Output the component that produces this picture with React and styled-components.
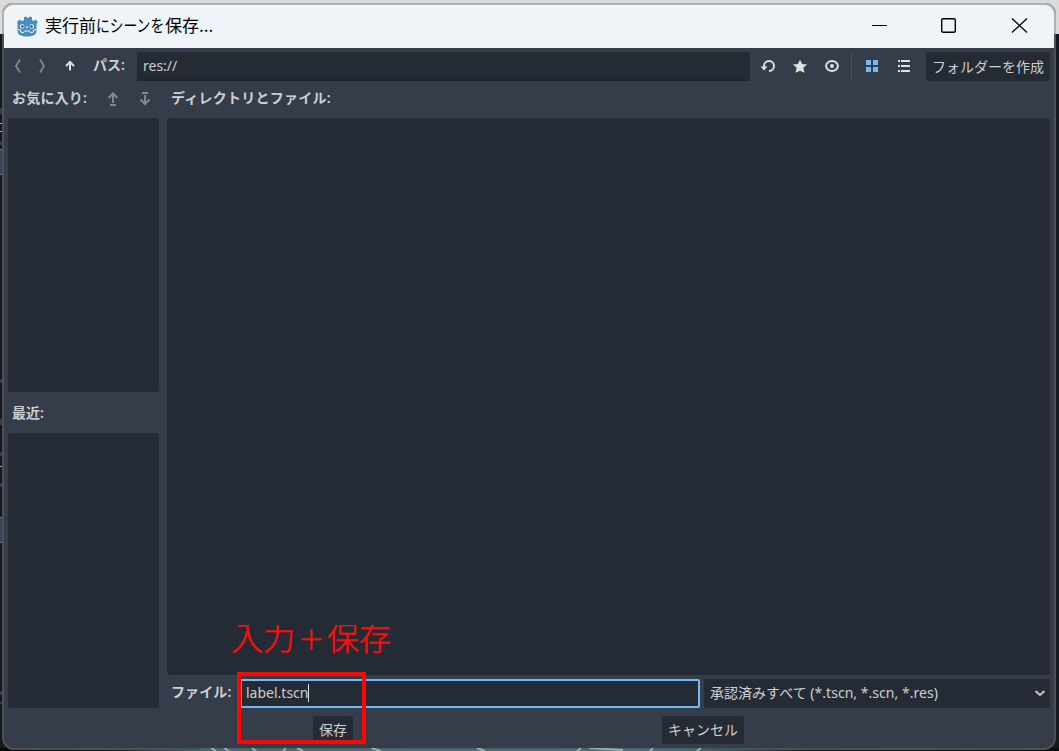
import React from 'react';
import styled, { createGlobalStyle } from 'styled-components';

const Global = createGlobalStyle`
  *{box-sizing:border-box}
  body{margin:0;overflow:hidden;background:#14171d}
`;
const Desktop = styled.div`
  position:relative;width:1059px;height:751px;padding:5px 5px 3px 4px;overflow:hidden;
  font:14px/20px "Noto Sans","Noto Sans CJK JP",sans-serif;color:#cdcfd2;
`;
const Backdrop = styled.svg`position:absolute;left:0;top:0;`;
const Foam = styled.svg`position:absolute;left:0;top:748px;`;
const Window = styled.div`
  position:relative;width:1050px;height:743px;border-radius:9px 9px 10px 10px;
  background:#363d4a;box-shadow:0 0 0 2px #504f52;display:flex;flex-direction:column;
`;
const TitleBar = styled.header`
  height:43px;flex:none;background:#eff4f9;border-radius:9px 9px 0 0;display:flex;align-items:center;
  color:#000;padding-left:12px;box-shadow:0 0 0 2px #b0b0b0;
  clip-path:polygon(-2px -2px,1052px -2px,1052px 29px,1050px 29px,1050px 43px,0 43px,0 29px,-2px 29px);
`;
const Title = styled.div`
  font:17px/24px "Noto Sans CJK JP",sans-serif;margin:-4px 0 0 7px;flex:1;white-space:nowrap;display:flex;
`;
const Kana = styled.span`display:block;width:69px;transform:scaleX(.81);transform-origin:0 0;`;
const Caption = styled.svg`width:70px;height:43px;position:relative;left:1px;`;
const Body = styled.main`flex:1;padding:4px;display:flex;flex-direction:column;`;
const Toolbar = styled.div`height:29px;display:flex;align-items:center;`;
const Icon = styled.svg`
  width:16px;height:16px;flex:none;margin:0 0 1px ${p => p.$gap || 0}px;opacity:${p => p.$dim ? .45 : 1};
`;
const Label = styled.div`
  font-weight:600;white-space:nowrap;margin-left:${p => p.$left || 0}px;width:${p => p.$w}px;flex:none;
  padding-bottom:${p => p.$lift || 0}px;letter-spacing:${p => p.$track || 0}px;
`;
const Field = styled.div`
  height:29px;background:#252b34;border-radius:3px;display:flex;align-items:center;padding:0 6px;
  width:${p => p.$w}px;flex:none;white-space:nowrap;
`;
const PathField = styled(Field)`margin-left:12px;border-bottom:2px solid #20252d;border-radius:3px 3px 0 0;`;
const NameField = styled(Field)`border:2px solid #70bafa;padding:0 4px 2px;margin-left:8px;border-radius:2px;`;
const Caret = styled.i`width:1px;height:18px;background:#dfe0e2;`;
const FilterField = styled(Field)`margin-left:4px;justify-content:space-between;padding:0 2px 1px 6px;letter-spacing:.03px;`;
const Button = styled.div`
  height:28px;width:${p => p.$w}px;background:#252b34;border-radius:3px;
  display:flex;align-items:center;justify-content:center;flex:none;white-space:nowrap;
`;
const CreateButton = styled(Button)`height:29px;margin-left:14px;`;
const Divider = styled.i`width:1px;height:29px;background:#4b515d;margin-left:11px;`;
const Columns = styled.div`display:flex;height:627px;gap:8px;`;
const Side = styled.section`width:151px;display:flex;flex-direction:column;`;
const Files = styled.section`width:883px;display:flex;flex-direction:column;`;
const Heading = styled.div`height:${p => p.$h}px;display:flex;align-items:center;padding-left:4px;padding-bottom:${p => p.$pb || 0}px;flex:none;`;
const List = styled.div`height:${p => p.$h}px;flex:none;background:#252b34;border-radius:3px;`;
const FileRow = styled.div`display:flex;align-items:center;margin-top:4px;`;
const Actions = styled.div`display:flex;margin-top:8px;padding-left:305px;gap:309px;`;
const Note = styled.div`
  position:absolute;left:231px;top:613px;height:47px;clip-path:inset(12px 0 0 0);color:#ff0c0c;
  font:300 32px/47px "Noto Sans CJK JP",sans-serif;white-space:nowrap;-webkit-text-stroke:.5px #ff0c0c;
`;
const Plus = styled.span`display:inline-block;transform:translateY(1px) scale(.82);`;
const Frame = styled.div`position:absolute;left:237px;top:672px;width:129px;height:72px;border:4px solid #ff0505;`;

const Stroke = ({ d, color = '#e0e0e0', w = 2, ...rest }) => (
  <Icon viewBox="0 0 16 16" fill="none" stroke={color} strokeWidth={w} {...rest}><path d={d} /></Icon>
);

const Godot = () => (
  <svg width="22" height="22" viewBox="0 0 22 22">
    <path fill="#478cbf" d="M1 6 3.500 3.500 6 5 8 4.200 8 1.300 10.500 .5 11.500 2.500 13.500 .5 16 1.300v3l2 .8 1.500-1.600L22 6l-1.500 2v7c0 4-4 5.500-9.300 5.500S1.500 19 1.500 15V8z" />
    <path fill="none" stroke="#e8f1f8" strokeWidth="1" d="M1.500 13.500 4.500 14v2l3 .7 1-1.700h5l1 1.700 3-.7V14l3-.5" />
    <circle cx="6.200" cy="10.400" r="2.200" fill="#fff" /><circle cx="15.800" cy="10.400" r="2.200" fill="#fff" />
    <circle cx="6.500" cy="10.500" r="1.300" fill="#414042" /><circle cx="15.500" cy="10.500" r="1.300" fill="#414042" />
    <path stroke="#e8f1f8" strokeWidth="1.200" d="M11 10v2.500" />
  </svg>
);

const Scene = () => (
  <Backdrop width="1059" height="751">
    <defs>
      <linearGradient id="sea">
        <stop offset="0" stopColor="#080a0d" /><stop offset=".1" stopColor="#14181c" />
        <stop offset=".2" stopColor="#47727f" /><stop offset=".6" stopColor="#4b7d8c" />
        <stop offset=".67" stopColor="#3b6878" /><stop offset=".76" stopColor="#181c20" /><stop offset="1" stopColor="#0b0e10" />
      </linearGradient>
    </defs>
    <path fill="#14191f" d="M0 34h1059v717H0z" />
    <path fill="#dadada" d="M0 0h1059v34H0z" />
    <path fill="#666" d="M952 4h13v1h-13z" />
    <path fill="#363d4a" d="M0 108h4v6H0zM0 141h4v4H0zM0 379h4v4H0zM0 419h4v6H0zM0 452h4v4H0zM0 483h4v4H0zM0 691h4v4H0zM0 702h4v2H0z" />
    <path fill="#304660" stroke="#667b8c" d="M-1 149.500h6v25h-6zM-1 517.500h6v25h-6z" />
    <path stroke="#aaa" d="M0 123.500h4M0 131.500h4M0 466.500h2" />
    <path fill="url(#sea)" d="M0 748h1059v3H0z" />
  </Backdrop>
);

export default function App() {
  return (
    <Desktop>
      <Global />
      <Scene />
      <Window>
        <TitleBar>
          <Godot />
          <Title>実行前<Kana>にシーンを</Kana>保存...</Title>
          <Caption viewBox="0 0 70 43"><path d="M27 20.500h15" stroke="#000" /></Caption>
          <Caption viewBox="0 0 70 43"><rect x="26.700" y="13.700" width="13.600" height="13.600" rx="1.500" fill="none" stroke="#000" strokeWidth="1.400" /></Caption>
          <Caption viewBox="0 0 70 43"><path d="m27 13.500 15 14m0-14-15 14" stroke="#000" strokeWidth="1.300" /></Caption>
        </TitleBar>
        <Body>
          <Toolbar>
            <Stroke d="M12 1.500 8 8l4 6.500" $dim w={1.8} />
            <Stroke d="M4 1.500 8 8l-4 6.500" $dim w={1.8} $gap={12} />
            <Stroke d="M8 12.500V4.500M4 8l4-4 4 4" $gap={10} />
            <Label $left={15} $w={32} $lift={3}>パス:</Label>
            <PathField $w={613}>res://</PathField>
            <Icon $gap={10} viewBox="0 0 16 16">
              <path d="M4 9V8a5 5 0 1 1 5 5" fill="none" stroke="#e0e0e0" strokeWidth="2" />
              <path d="M.5 8.500h7L4 12.500z" fill="#e0e0e0" />
            </Icon>
            <Icon $gap={16} viewBox="0 0 16 16"><path fill="#e0e0e0" d="m8 1.500 2 4.500 5 .5-3.700 3.300 1.200 5L8 12.800l-4.500 2 1.200-5L1 6.500 6 6z" /></Icon>
            <Icon $gap={16} viewBox="0 0 16 16"><ellipse cx="8" cy="8" rx="5.900" ry="5.100" fill="none" stroke="#e0e0e0" strokeWidth="2" /><circle cx="8" cy="8" r="2" fill="#e0e0e0" /></Icon>
            <Divider />
            <Icon $gap={12} viewBox="0 0 16 16"><path fill="#70bafa" d="M2 2h5v5H2zM9 2h5v5H9zM2 9h5v5H2zM9 9h5v5H9z" /></Icon>
            <Icon $gap={16} viewBox="0 0 16 16"><path fill="#e0e0e0" d="M2 2h2v2H2zM5 2h9v2H5zM2 7h2v2H2zM5 7h9v2H5zM2 12h2v2H2zM5 12h9v2H5z" /></Icon>
            <CreateButton $w={124}>フォルダーを作成</CreateButton>
          </Toolbar>
          <Columns>
            <Side>
              <Heading $h={37} $pb={3}>
                <Label $w={76} $track={.2}>お気に入り:</Label>
                <Stroke d="M8 13V4M3.500 8 8 3.500 12.500 8M5 15h6" $dim $gap={17} />
                <Stroke d="M8 5v9M3.500 9.500 8 14l4.500-4.500M5 3h6" $dim $gap={16} />
              </Heading>
              <List $h={274} />
              <Heading $h={41}><Label>最近:</Label></Heading>
              <List $h={275} />
            </Side>
            <Files>
              <Heading $h={37} $pb={3}><Label $track={.25}>ディレクトリとファイル:</Label></Heading>
              <List $h={557} />
              <FileRow>
                <Label $left={4} $w={61} $lift={3} $track={.1}>ファイル:</Label>
                <NameField $w={460}>label.tscn<Caret /></NameField>
                <FilterField $w={346}>
                  承認済みすべて (*.tscn, *.scn, *.res)
                  <Stroke d="m3.500 6 4.500 4 4.500-4" color="#c4c6c9" />
                </FilterField>
              </FileRow>
            </Files>
          </Columns>
          <Actions>
            <Button $w={40}>保存</Button>
            <Button $w={82}>キャンセル</Button>
          </Actions>
        </Body>
      </Window>
      <Foam width="1059" height="3">
        <path fill="#56707c" d="M200 0h500v2H200z" opacity=".5" />
        <path stroke="#9eb0aa" strokeWidth="2" d="m211 0 5 3m8-3 5 3m23-3 4 3m30-3-3 3m14-3 6 3m68-3 10 3m96-3 8 3m96-3-4 3m12-3 34 2m30-2-3 3m51-3-4 3" />
      </Foam>
      <Note>入力<Plus>＋</Plus>保存</Note>
      <Frame />
    </Desktop>
  );
}
